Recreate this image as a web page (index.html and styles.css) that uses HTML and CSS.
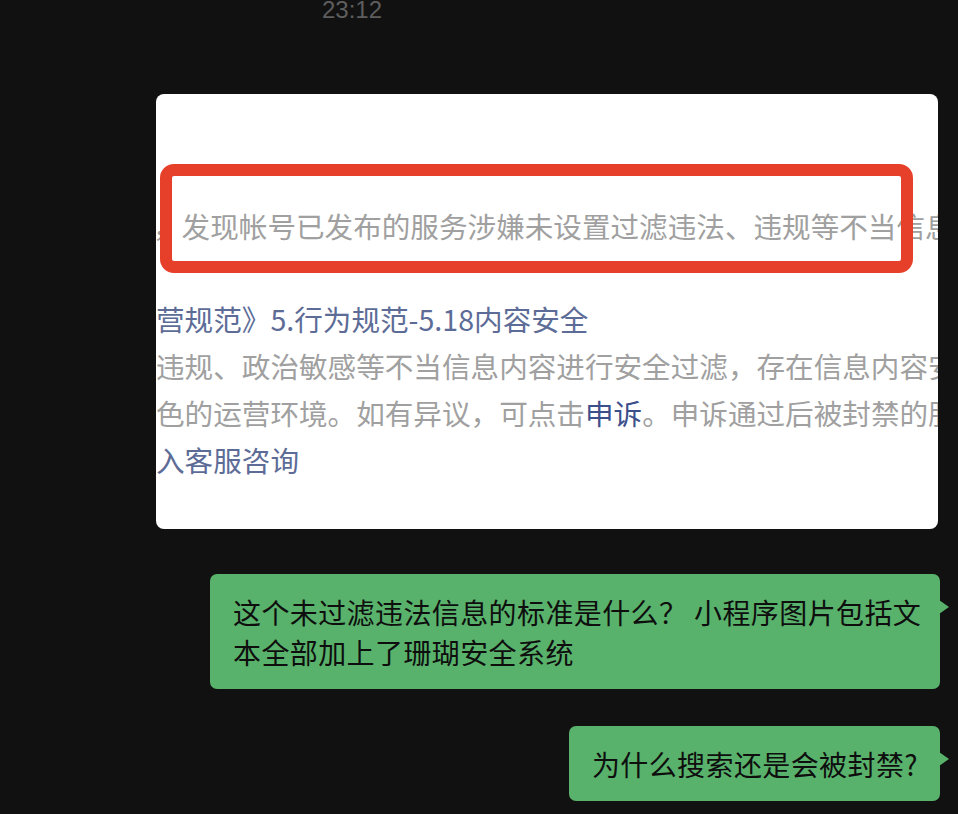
FILE: index.html
```html
<!DOCTYPE html>
<html lang="zh-CN">
<head>
    <meta charset="UTF-8">
    <meta name="viewport" content="width=device-width, initial-scale=1.0">
    <title>聊天</title>
    <link rel="stylesheet" href="styles.css">
</head>
<body>
    <div class="chat">
        <div class="time">23:12</div>

        <div class="msg-image">
            <div class="doc">
                <p class="doc-line gray lead">，发现帐号已发布的服务涉嫌未设置过滤违法、违规等不当信息内容</p>
                <div class="doc-para">
                    <p class="doc-line link">营规范》5.行为规范-5.18内容安全</p>
                    <p class="doc-line gray">违规、政治敏感等不当信息内容进行安全过滤，存在信息内容安全</p>
                    <p class="doc-line gray">色的运营环境。如有异议，可点击<span class="appeal">申诉</span>。申诉通过后被封禁的服务</p>
                    <p class="doc-line link">入客服咨询</p>
                </div>
            </div>
            <div class="highlight"></div>
        </div>

        <div class="bubble first">这个未过滤违法信息的标准是什么？ 小程序图片包括文本全部加上了珊瑚安全系统</div>
        <div class="bubble second">为什么搜索还是会被封禁?</div>
    </div>
</body>
</html>
```

FILE: styles.css
```css
body {
    margin: 0;
    height: 814px;
    overflow: hidden;
    background-color: #111111;
    font-family: "Noto Sans CJK SC", "Noto Sans", sans-serif;
}
.chat {
    display: flex;
    flex-direction: column;
    align-items: flex-end;
    padding-right: 18px;
}
.time {
    align-self: flex-start;
    margin-top: -4px;
    padding-left: 322px;
    font-family: "Liberation Sans", Arial, sans-serif;
    font-size: 24px;
    color: #5e5e5e;
}
.msg-image {
    position: relative;
    width: 782px;
    height: 435px;
    margin-top: 70px;
    margin-right: 2px;
    background-color: #fff;
    border-radius: 8px;
    overflow: hidden;
}
.doc {
    padding-top: 109px;
    font-size: 28.6px;
    line-height: 46.7px;
}
.doc-line {
    margin: 0;
    white-space: nowrap;
}
.doc-line.lead {
    margin-left: -3px;
}
.doc-para {
    margin-top: 46.7px;
}
.gray {
    color: #a0a0a0;
}
.link {
    color: #5d6c97;
}
.appeal {
    color: #3d4f8b;
}
.highlight {
    position: absolute;
    left: 4px;
    top: 70px;
    width: 753px;
    height: 109px;
    box-sizing: border-box;
    border: 12px solid #e6402a;
    border-radius: 14px;
}
.bubble {
    position: relative;
    max-width: 730px;
    box-sizing: border-box;
    padding: 18px 14px 17px 23px;
    background-color: #59b26b;
    border-radius: 7px;
    color: #0e0e0e;
    font-size: 28px;
    line-height: 40px;
    letter-spacing: 0.4px;
}
.bubble::after {
    content: "";
    position: absolute;
    right: -9px;
    top: 26px;
    border-left: 10px solid #59b26b;
    border-top: 7px solid transparent;
    border-bottom: 7px solid transparent;
}
.bubble.first {
    margin-top: 45px;
}
.bubble.second {
    margin-top: 37px;
    padding-right: 22px;
}
```
